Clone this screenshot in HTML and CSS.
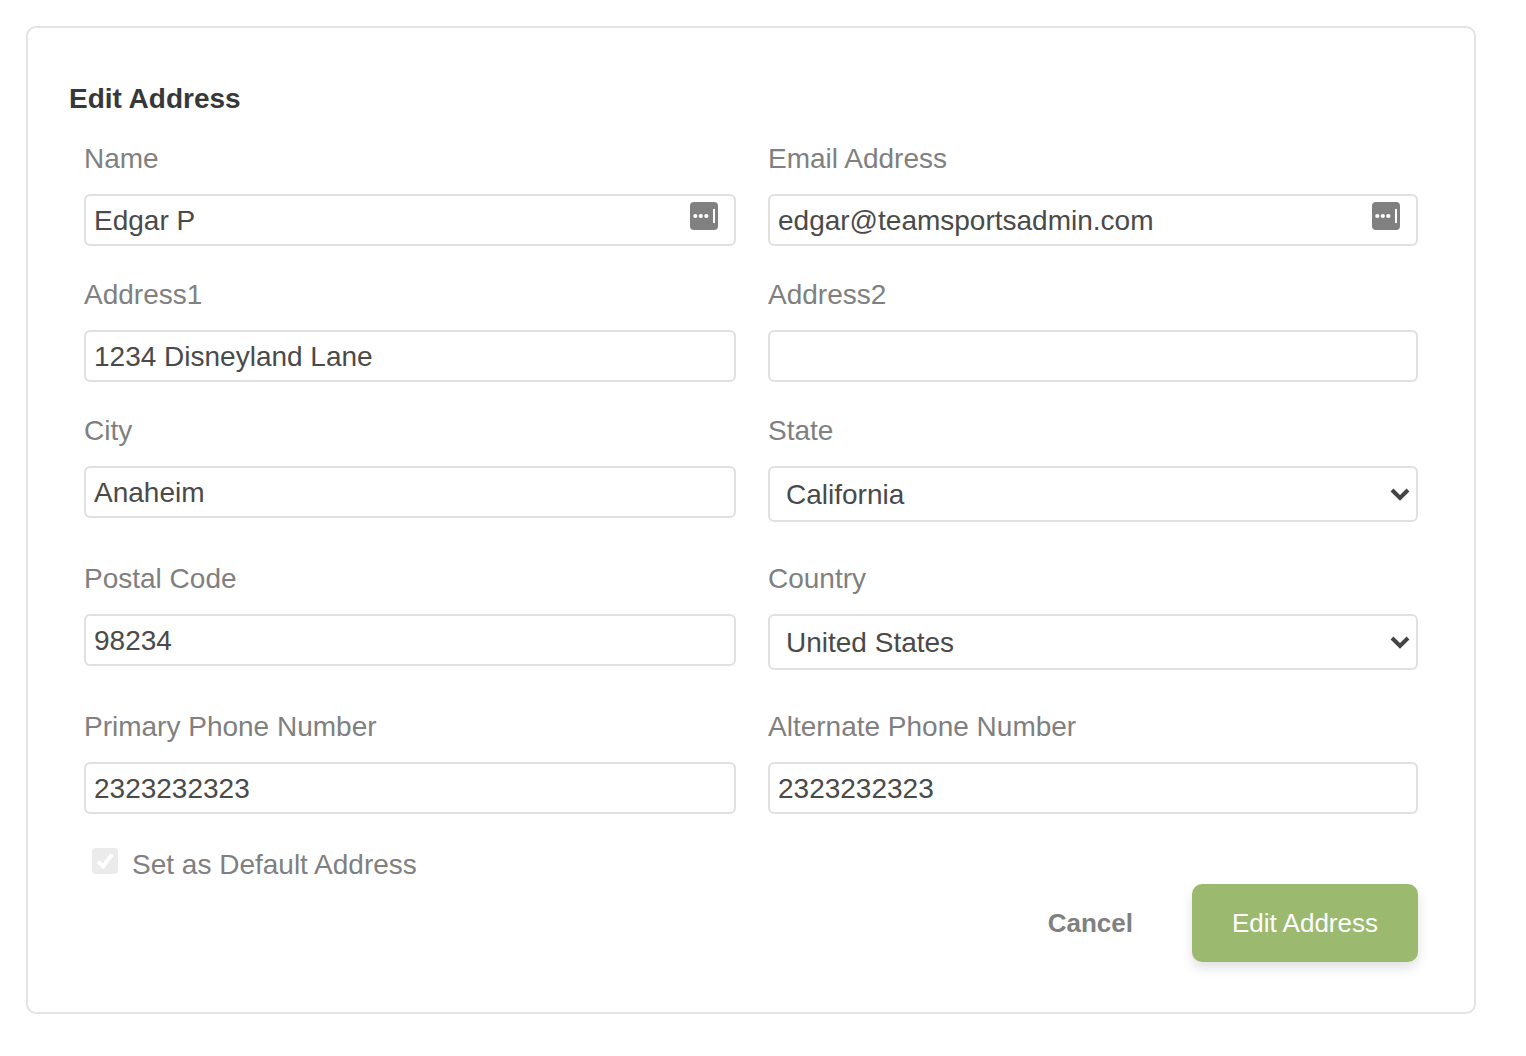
FILE: index.html
```html
<!DOCTYPE html>
<html lang="en">
<head>
    <meta charset="UTF-8">
    <meta name="viewport" content="width=device-width, initial-scale=1.0">
    <title>Edit Address</title>
    <link rel="stylesheet" href="styles.css">
</head>
<body>
    <div class="card">
        <h2 class="card-title">Edit Address</h2>
        <form class="address-form">
            <div class="field-grid">
                <div class="field">
                    <label class="field-label">Name</label>
                    <div class="input-wrap">
                        <input class="text-input" type="text" value="Edgar P">
                        <svg class="autofill-icon" width="28" height="28" viewBox="0 0 28 28">
                            <rect width="28" height="28" rx="4" fill="#808080"/>
                            <circle cx="5.3" cy="14" r="2.1" fill="#fff"/>
                            <circle cx="10.8" cy="14" r="2.1" fill="#fff"/>
                            <circle cx="16.3" cy="14" r="2.1" fill="#fff"/>
                            <rect x="23" y="7" width="2" height="14" fill="#fff"/>
                        </svg>
                    </div>
                </div>
                <div class="field">
                    <label class="field-label">Email Address</label>
                    <div class="input-wrap">
                        <input class="text-input" type="text" value="edgar@teamsportsadmin.com">
                        <svg class="autofill-icon" width="28" height="28" viewBox="0 0 28 28">
                            <rect width="28" height="28" rx="4" fill="#808080"/>
                            <circle cx="5.3" cy="14" r="2.1" fill="#fff"/>
                            <circle cx="10.8" cy="14" r="2.1" fill="#fff"/>
                            <circle cx="16.3" cy="14" r="2.1" fill="#fff"/>
                            <rect x="23" y="7" width="2" height="14" fill="#fff"/>
                        </svg>
                    </div>
                </div>
                <div class="field">
                    <label class="field-label">Address1</label>
                    <input class="text-input" type="text" value="1234 Disneyland Lane">
                </div>
                <div class="field">
                    <label class="field-label">Address2</label>
                    <input class="text-input" type="text" value="">
                </div>
                <div class="field">
                    <label class="field-label">City</label>
                    <input class="text-input" type="text" value="Anaheim">
                </div>
                <div class="field">
                    <label class="field-label">State</label>
                    <div class="select-wrap">
                        <select class="select-input">
                            <option>California</option>
                        </select>
                        <svg class="select-arrow" width="20" height="14" viewBox="0 0 20 14">
                            <path d="M2 3l8 8 8-8" fill="none" stroke="#444" stroke-width="4"/>
                        </svg>
                    </div>
                </div>
                <div class="field">
                    <label class="field-label">Postal Code</label>
                    <input class="text-input" type="text" value="98234">
                </div>
                <div class="field">
                    <label class="field-label">Country</label>
                    <div class="select-wrap">
                        <select class="select-input">
                            <option>United States</option>
                        </select>
                        <svg class="select-arrow" width="20" height="14" viewBox="0 0 20 14">
                            <path d="M2 3l8 8 8-8" fill="none" stroke="#444" stroke-width="4"/>
                        </svg>
                    </div>
                </div>
                <div class="field">
                    <label class="field-label">Primary Phone Number</label>
                    <input class="text-input" type="text" value="2323232323">
                </div>
                <div class="field">
                    <label class="field-label">Alternate Phone Number</label>
                    <input class="text-input" type="text" value="2323232323">
                </div>
            </div>
            <label class="default-check">
                <span class="check-box">
                    <svg width="26" height="26" viewBox="0 0 26 26">
                        <path d="M6 13.5l5 5 9-12" fill="none" stroke="#fff" stroke-width="4"/>
                    </svg>
                </span>
                <span class="check-text">Set as Default Address</span>
            </label>
            <div class="form-actions">
                <button class="btn-cancel" type="button">Cancel</button>
                <button class="btn-submit" type="submit">Edit Address</button>
            </div>
        </form>
    </div>
</body>
</html>
```

FILE: styles.css
```css
body {
    font-family: "Liberation Sans", Arial, sans-serif;
    margin: 0;
    background-color: #fff;
    color: #4a4a4a;
}

.card {
    box-sizing: border-box;
    width: 1450px;
    height: 988px;
    margin: 26px;
    padding: 54px 41px 50px;
    border: 2px solid #e3e3e3;
    border-radius: 10px;
}

.card-title {
    margin: 0 0 25px;
    font-size: 28px;
    line-height: 34px;
    font-weight: bold;
    color: #383838;
}

.address-form {
    padding: 0 15px;
}

.field-grid {
    display: grid;
    grid-template-columns: 652px 650px;
    column-gap: 32px;
    row-gap: 31px;
}

.field-label {
    display: block;
    padding-top: 1px;
    margin-bottom: 18px;
    font-size: 28px;
    line-height: 34px;
    color: #808080;
}

.input-wrap,
.select-wrap {
    position: relative;
}

.text-input {
    display: block;
    box-sizing: border-box;
    width: 100%;
    height: 52px;
    padding: 2px 8px 0;
    border: 2px solid #e0e0e0;
    border-radius: 6px;
    font-family: inherit;
    font-size: 28px;
    color: #4a4a4a;
    background: #fff;
}

.autofill-icon {
    position: absolute;
    top: 8px;
    right: 18px;
}

.select-wrap {
    margin-bottom: 8px;
}

.select-input {
    display: block;
    box-sizing: border-box;
    width: 100%;
    height: 56px;
    padding: 0 16px;
    border: 2px solid #e0e0e0;
    border-radius: 6px;
    font-family: inherit;
    font-size: 28px;
    color: #4a4a4a;
    background: #fff;
    appearance: none;
}

.select-arrow {
    position: absolute;
    top: 21px;
    right: 8px;
}

.default-check {
    display: flex;
    align-items: flex-start;
    gap: 14px;
    margin: 34px 0 0 8px;
    font-size: 28px;
    line-height: 34px;
    color: #808080;
}

.check-box {
    display: block;
    width: 26px;
    height: 26px;
    border-radius: 4px;
    background-color: #ebebeb;
}

.form-actions {
    display: flex;
    justify-content: flex-end;
    align-items: center;
    gap: 59px;
    margin-top: 2px;
}

.btn-cancel {
    padding: 0;
    border: none;
    background: none;
    font-family: inherit;
    font-size: 26px;
    font-weight: bold;
    color: #808080;
}

.btn-submit {
    width: 226px;
    height: 78px;
    border: none;
    border-radius: 10px;
    background-color: #9bba70;
    box-shadow: 0 6px 12px rgba(0, 0, 0, 0.12);
    font-family: inherit;
    font-size: 26px;
    color: #fff;
}
```
